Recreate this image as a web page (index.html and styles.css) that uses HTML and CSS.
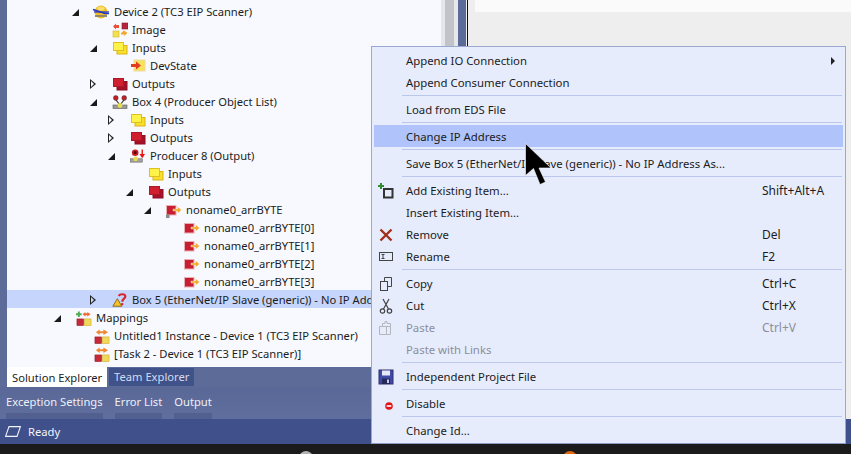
FILE: index.html
```html
<!DOCTYPE html>
<html lang="en">
<head>
<meta charset="utf-8">
<title>Solution Explorer</title>
<link rel="stylesheet" href="styles.css">
</head>
<body>
<svg class="defs" width="0" height="0" aria-hidden="true">
  <symbol id="yellow" viewBox="0 0 16 14"><rect x="5" y="4.500" width="10" height="8.500" fill="#f8df2a" stroke="#d8b418"/><rect x="1.500" y="1.500" width="10" height="8" fill="#fff34a" stroke="#e0c020"/></symbol>
  <symbol id="red" viewBox="0 0 16 14"><rect x="5" y="4.500" width="10" height="8.500" fill="#a8102a" stroke="#8a0f20"/><rect x="1.500" y="1.500" width="10" height="8" fill="#d0202f" stroke="#a81a28"/></symbol>
  <symbol id="image" viewBox="0 0 16 16"><path d="M1 4.500 4 1.500V3H7V6H4V7.500Z" fill="#e8503a"/><rect x="10" y="1" width="6" height="6" fill="#b5243a" stroke="#8f1a2c" stroke-width=".6"/><rect x="1" y="9" width="6" height="6" fill="#f4e04a" stroke="#d0b830" stroke-width=".6"/><path d="M9 11 12 8.500 15.500 11 12 14V12.500H9Z" fill="#f0a83a"/></symbol>
  <symbol id="devstate" viewBox="0 0 16 16"><rect x="4" y="2" width="11" height="11" fill="#f8e25a" stroke="#eed9a0"/><path d="M1 6H6V3.500L11 7.500 6 11.500V9H1Z" fill="#e33a22"/></symbol>
  <symbol id="device" viewBox="0 0 18 16"><ellipse cx="9" cy="8" rx="6.500" ry="6.500" fill="#f2bf22"/><ellipse cx="9" cy="4.500" rx="3.500" ry="2" fill="#fadf70"/><path d="M1 5.500 13 9.500H17" fill="none" stroke="#2438c8" stroke-width="1.500"/><path d="M2 8H17" stroke="#2438c8" stroke-width="1.300"/><rect x="3" y="11" width="12" height="2" fill="#8e8870"/></symbol>
  <symbol id="box" viewBox="0 0 16 16"><rect x="1" y="11" width="14" height="3.500" fill="#9a9a96" stroke="#5a5a58" stroke-width=".6"/><path d="M4 6 8 11 12 6" fill="none" stroke="#333" stroke-width="1.200"/><circle cx="8" cy="11.500" r="2.400" fill="#e9dc50"/><circle cx="3.800" cy="4" r="2.400" fill="#c81d25" stroke="#333" stroke-width=".5"/><circle cx="12.200" cy="4" r="2.400" fill="#c81d25" stroke="#333" stroke-width=".5"/></symbol>
  <symbol id="producer" viewBox="0 0 17 16"><rect x="0" y="11" width="13" height="3.500" fill="#a4a4a0" stroke="#5a5a58" stroke-width=".6"/><circle cx="6" cy="11" r="2.500" fill="#e9dc50"/><circle cx="5.500" cy="4.500" r="3.500" fill="#c81d25"/><circle cx="5.500" cy="4.500" r="1.500" fill="#400"/><path d="M13 1V8" stroke="#e11" stroke-width="1.500"/><path d="M10 6H16L13 10.500Z" fill="#e11"/></symbol>
  <symbol id="var" viewBox="0 0 16 16"><rect x=".5" y="3.500" width="9.500" height="9.500" fill="#c81f30" stroke="#e8b0b4"/><path d="M7 7H11.500V4.500L15.500 8 11.500 11.500V9H7Z" fill="#f3a828" stroke="#fff" stroke-width=".4"/></symbol>
  <symbol id="varlock" viewBox="0 0 16 16"><rect x=".5" y="3.500" width="9.500" height="9.500" fill="#c81f30" stroke="#e8b0b4"/><path d="M7 7H11.500V4.500L15.500 8 11.500 11.500V9H7Z" fill="#f3a828" stroke="#fff" stroke-width=".4"/><rect x="0" y="12.500" width="3.500" height="3.500" fill="#8a8a8a"/></symbol>
  <symbol id="warn" viewBox="0 0 18 16"><path d="M1 15 6 6.500 11 15Z" fill="#f4c524" stroke="#8a5b10"/><path d="M7.500 3.500C9 .8 15 .8 15 4 15 6.500 11.500 6.500 11.500 10" fill="none" stroke="#d8262c" stroke-width="2.400"/><rect x="10.300" y="11.500" width="2.400" height="2.400" fill="#d8262c"/></symbol>
  <symbol id="mapplus" viewBox="0 0 17 16"><rect x="1" y="9" width="7" height="7" fill="#c52a38" stroke="#8f1a2a" stroke-width=".6"/><rect x="9" y="9" width="7" height="7" fill="#f3d758" stroke="#c8a928" stroke-width=".6"/><path d="M3 1V7M0 4H6" stroke="#52a852" stroke-width="2"/><path d="M7 4 10 1.500V3H12V1.500L15.500 4 12 6.500V5H10V6.500Z" fill="#ef6b33"/></symbol>
  <symbol id="map" viewBox="0 0 17 16"><rect x="1" y="9" width="7" height="7" fill="#c52a38" stroke="#8f1a2a" stroke-width=".6"/><rect x="9" y="9" width="7" height="7" fill="#f3d758" stroke="#c8a928" stroke-width=".6"/><path d="M2 4 6 1V3H10V1L15 4 10 7V5H6V7Z" fill="#ef8a33"/></symbol>
</svg>

<div class="window">
  <div class="workspace">
    <div class="leftpane">
      <div class="tree">
        <div class="row lv2"><span class="tw open"></span><svg class="ic wide"><use href="#device"/></svg><span>Device 2 (TC3 EIP Scanner)</span></div>
        <div class="row lv3"><span class="tw"></span><svg class="ic"><use href="#image"/></svg><span>Image</span></div>
        <div class="row lv3"><span class="tw open"></span><svg class="ic"><use href="#yellow"/></svg><span>Inputs</span></div>
        <div class="row lv4"><span class="tw"></span><svg class="ic"><use href="#devstate"/></svg><span>DevState</span></div>
        <div class="row lv3"><span class="tw closed"></span><svg class="ic"><use href="#red"/></svg><span>Outputs</span></div>
        <div class="row lv3"><span class="tw open"></span><svg class="ic"><use href="#box"/></svg><span>Box 4 (Producer Object List)</span></div>
        <div class="row lv4"><span class="tw closed"></span><svg class="ic"><use href="#yellow"/></svg><span>Inputs</span></div>
        <div class="row lv4"><span class="tw closed"></span><svg class="ic"><use href="#red"/></svg><span>Outputs</span></div>
        <div class="row lv4"><span class="tw open"></span><svg class="ic"><use href="#producer"/></svg><span>Producer 8 (Output)</span></div>
        <div class="row lv5"><span class="tw"></span><svg class="ic"><use href="#yellow"/></svg><span>Inputs</span></div>
        <div class="row lv5"><span class="tw open"></span><svg class="ic"><use href="#red"/></svg><span>Outputs</span></div>
        <div class="row lv6"><span class="tw open"></span><svg class="ic"><use href="#varlock"/></svg><span>noname0_arrBYTE</span></div>
        <div class="row lv7"><span class="tw"></span><svg class="ic"><use href="#var"/></svg><span>noname0_arrBYTE[0]</span></div>
        <div class="row lv7"><span class="tw"></span><svg class="ic"><use href="#var"/></svg><span>noname0_arrBYTE[1]</span></div>
        <div class="row lv7"><span class="tw"></span><svg class="ic"><use href="#var"/></svg><span>noname0_arrBYTE[2]</span></div>
        <div class="row lv7"><span class="tw"></span><svg class="ic"><use href="#var"/></svg><span>noname0_arrBYTE[3]</span></div>
        <div class="row lv3 selected"><span class="tw closed"></span><svg class="ic"><use href="#warn"/></svg><span>Box 5 (EtherNet/IP Slave (generic)) - No IP Address</span></div>
        <div class="row lv1"><span class="tw open"></span><svg class="ic"><use href="#mapplus"/></svg><span>Mappings</span></div>
        <div class="row lv2"><span class="tw"></span><svg class="ic"><use href="#map"/></svg><span>Untitled1 Instance - Device 1 (TC3 EIP Scanner)</span></div>
        <div class="row lv2"><span class="tw"></span><svg class="ic"><use href="#map"/></svg><span>[Task 2 - Device 1 (TC3 EIP Scanner)]</span></div>
      </div>
      <div class="paneltabs">
        <span class="ptab active">Solution Explorer</span>
        <span class="ptab">Team Explorer</span>
      </div>
      <div class="dock">
        <span class="dtab">Exception Settings</span>
        <span class="dtab">Error List</span>
        <span class="dtab">Output</span>
      </div>
    </div>
    <div class="strip light"></div>
    <div class="strip thumb"></div>
    <div class="strip pale"></div>
    <div class="strip blue"></div>
    <div class="strip hair"></div>
    <div class="strip line"></div>
    <div class="rightpane"><div class="editor"></div></div>
  </div>
  <div class="status">
    <svg class="sicon" viewBox="0 0 16 11"><path d="M4 .6H15.400L12 10.400H.6Z" fill="none" stroke="#f2f4fb" stroke-width="1.100"/></svg>
    <span>Ready</span>
  </div>
  <div class="taskbar"><span class="dot grey"></span><span class="dot orange"></span></div>
</div>

<div class="menu">
  <div class="mi"><span class="mslot"></span><span class="ml">Append IO Connection</span><span class="sub"></span></div>
  <div class="mi"><span class="mslot"></span><span class="ml">Append Consumer Connection</span></div>
  <div class="sep"></div>
  <div class="mi"><span class="mslot"></span><span class="ml">Load from EDS File</span></div>
  <div class="sep"></div>
  <div class="mi hover"><span class="mslot"></span><span class="ml">Change IP Address</span></div>
  <div class="sep"></div>
  <div class="mi"><span class="mslot"></span><span class="ml">Save Box 5 (EtherNet/IP Slave (generic)) - No IP Address As...</span></div>
  <div class="sep"></div>
  <div class="mi"><svg class="mslot" viewBox="0 0 16 16"><path d="M3 0V6M0 3H6" stroke="#2f8f2f" stroke-width="2"/><rect x="6" y="6" width="8.500" height="8.500" fill="none" stroke="#333" stroke-width="2"/></svg><span class="ml">Add Existing Item...</span><span class="key">Shift+Alt+A</span></div>
  <div class="mi"><span class="mslot"></span><span class="ml">Insert Existing Item...</span></div>
  <div class="mi"><svg class="mslot" viewBox="0 0 16 16"><path d="M2.500 2.500 13.500 13.500M13.500 2.500 2.500 13.500" stroke="#a1301a" stroke-width="2.400"/></svg><span class="ml">Remove</span><span class="key">Del</span></div>
  <div class="mi"><svg class="mslot" viewBox="0 0 16 16"><rect x="1.500" y="3.500" width="13" height="8" fill="none" stroke="#444"/><path d="M3.500 5.500H6.500M3.500 9.500H6.500M5 5.500V9.500" stroke="#444"/></svg><span class="ml">Rename</span><span class="key">F2</span></div>
  <div class="sep"></div>
  <div class="mi"><svg class="mslot" viewBox="0 0 16 16"><rect x="2.500" y="5.500" width="7" height="9" fill="none" stroke="#444"/><path d="M6.500 5.500V1.500H13.500V10.500H9.500" fill="none" stroke="#444"/></svg><span class="ml">Copy</span><span class="key">Ctrl+C</span></div>
  <div class="mi"><svg class="mslot" viewBox="0 0 16 16"><path d="M5 1 10.500 11M11 1 5.500 11" stroke="#444" stroke-width="1.200"/><circle cx="4.500" cy="13" r="2.200" fill="none" stroke="#444" stroke-width="1.200"/><circle cx="11.500" cy="13" r="2.200" fill="none" stroke="#444" stroke-width="1.200"/></svg><span class="ml">Cut</span><span class="key">Ctrl+X</span></div>
  <div class="mi off"><svg class="mslot" viewBox="0 0 16 16"><path d="M1.500 6.500H8.500V14.500H1.500ZM8.500 6.500H12.500V14.500H8.500M4.500 6.500V3.500H7V1.500H9V3.500H12.500V6.500" fill="none" stroke="#b4b6bd"/></svg><span class="ml">Paste</span><span class="key">Ctrl+V</span></div>
  <div class="mi off"><span class="mslot"></span><span class="ml">Paste with Links</span></div>
  <div class="sep"></div>
  <div class="mi"><svg class="mslot" viewBox="0 0 16 16"><rect x="1" y="1" width="14" height="14" fill="#3f4aa8" stroke="#30306a"/><rect x="4" y="1.500" width="8" height="5" fill="#e6e8fa"/><rect x="4" y="9.500" width="8" height="5.500" fill="#262a58"/><rect x="9" y="10.500" width="2" height="3.500" fill="#c8cce8"/></svg><span class="ml">Independent Project File</span></div>
  <div class="sep"></div>
  <div class="mi"><svg class="mslot" viewBox="0 0 16 16"><circle cx="11" cy="10" r="3.800" fill="#e2121a"/><rect x="8.700" y="9.200" width="4.600" height="1.600" fill="#fff"/></svg><span class="ml">Disable</span></div>
  <div class="sep"></div>
  <div class="mi"><span class="mslot"></span><span class="ml">Change Id...</span></div>
</div>

<svg class="cursor" viewBox="0 0 28 44"><path d="M.5.500V32.500L8.500 25.500 15 41.500 20.500 39 14 25H26Z" fill="#000" stroke="#fff" stroke-width=".6"/></svg>
</body>
</html>
```
FILE: styles.css
```css
* { box-sizing: border-box; }
html, body { margin: 0; width: 851px; height: 454px; overflow: hidden; }
body { font-family: "Noto Sans", sans-serif; font-size: 11.2px; color: #1c1c1c; }
.defs { position: absolute; }

.window { width: 851px; height: 454px; display: flex; flex-direction: column; }
.workspace { height: 419px; display: flex; }

.leftpane { width: 441px; padding-left: 7px; background: #5d6b99; display: flex; flex-direction: column; }
.tree { height: 367px; padding-top: 2px; background: #f7f9fe; overflow: hidden; }
.row { height: 18px; display: flex; align-items: flex-start; white-space: nowrap; line-height: 20px; }
.lv1 { padding-left: 47px; }
.lv2 { padding-left: 65px; }
.lv3 { padding-left: 83px; }
.lv4 { padding-left: 101px; }
.lv5 { padding-left: 119px; }
.lv6 { padding-left: 137px; }
.lv7 { padding-left: 155px; }
.selected { background: #c5d5fb; }
.tw { width: 18px; height: 18px; flex: none; position: relative; }
.tw.open::after { content: ""; position: absolute; left: 0; top: 7px; border-style: solid; border-width: 0 0 7px 7px; border-color: transparent transparent #1a1a1a transparent; }
.tw.closed::after { content: ""; position: absolute; left: 0; top: 5px; width: 0; height: 0; border-style: solid; border-width: 5px 0 5px 6px; border-color: transparent transparent transparent #222; }
.tw.closed::before { content: ""; position: absolute; left: 1px; top: 7px; width: 0; height: 0; border-style: solid; border-width: 3px 0 3px 3px; border-color: transparent transparent transparent #f7f9fe; z-index: 1; }
.selected .tw.closed::before { border-left-color: #c5d5fb; }
.ic { width: 16px; height: 16px; margin: 2px 4px 0; flex: none; }
.ic.wide { width: 18px; margin-left: 2px; }

.paneltabs { height: 20px; display: flex; align-items: flex-start; gap: 2px; }
.ptab { height: 18px; margin-top: 1px; padding: 0 5px; line-height: 18px; white-space: nowrap; flex: none; color: #d4dbef; background: #3f5289; }
.ptab.active { height: 20px; margin-top: 0; width: 100px; color: #1c1c1c; background: #fff; line-height: 21px; }
.dock { flex: 1; margin-left: -7px; padding-left: 6px; display: flex; gap: 12px; background: linear-gradient(#5a6898, #5f6e9c); }
.dtab { height: 32px; padding-top: 6px; line-height: 18px; white-space: nowrap; color: #eef0f8; border-bottom: 6px solid #52608f; }

.strip { flex: none; }
.light { width: 4px; background: #e6e6ea; }
.thumb { width: 9px; background: #c2c3c9; }
.pale { width: 4px; background: #e6e7eb; }
.blue { width: 8px; background: #5d6b99; }
.hair { width: 1px; background: #f0f0f4; }
.line { width: 1px; background: #111; }
.rightpane { flex: 1; background: #eeeeef; padding-left: 7px; }
.editor { height: 12px; background: #fafafa; }

.status { height: 25px; display: flex; align-items: center; padding-left: 5px; background: #40508a; color: #f2f4fb; }
.sicon { width: 16px; height: 11px; margin-right: 7px; }
.taskbar { flex: 1; background: #1b1b1b; display: flex; gap: 250px; padding: 7px 0 0 299px; overflow: hidden; }
.dot { width: 14px; height: 14px; border-radius: 50%; flex: none; }
.grey { background: #b4b4b4; }
.orange { background: #e0690f; }

.menu { position: absolute; left: 371px; top: 46px; width: 475px; height: 398px; padding: 3px 2px 0; font-size: 11.35px; background: #e7ecfd; border: 1px solid #9aa8cf; border-bottom-color: #8e9bc0; }
.mi { height: 22px; display: flex; align-items: flex-start; padding-right: 8px; white-space: nowrap; line-height: 22px; }
.mslot { width: 16px; height: 16px; margin: 3px 12px 0 4px; flex: none; }
.ml { width: 356px; flex: none; }
.key { font-size: 12px; }
.sub { margin: 7px 0 0 auto; border-style: solid; border-width: 4px 0 4px 4px; border-color: transparent transparent transparent #222; }
.sep { height: 1px; margin: 1px 1px 3px 28px; background: #bcc7ec; }
.hover { margin-top: -1px; margin-bottom: 2px; padding-top: 1px; background: #b0c4fb; }
.off { color: #8c8e98; }

.cursor { position: absolute; left: 525px; top: 143px; width: 28px; height: 44px; }
```
